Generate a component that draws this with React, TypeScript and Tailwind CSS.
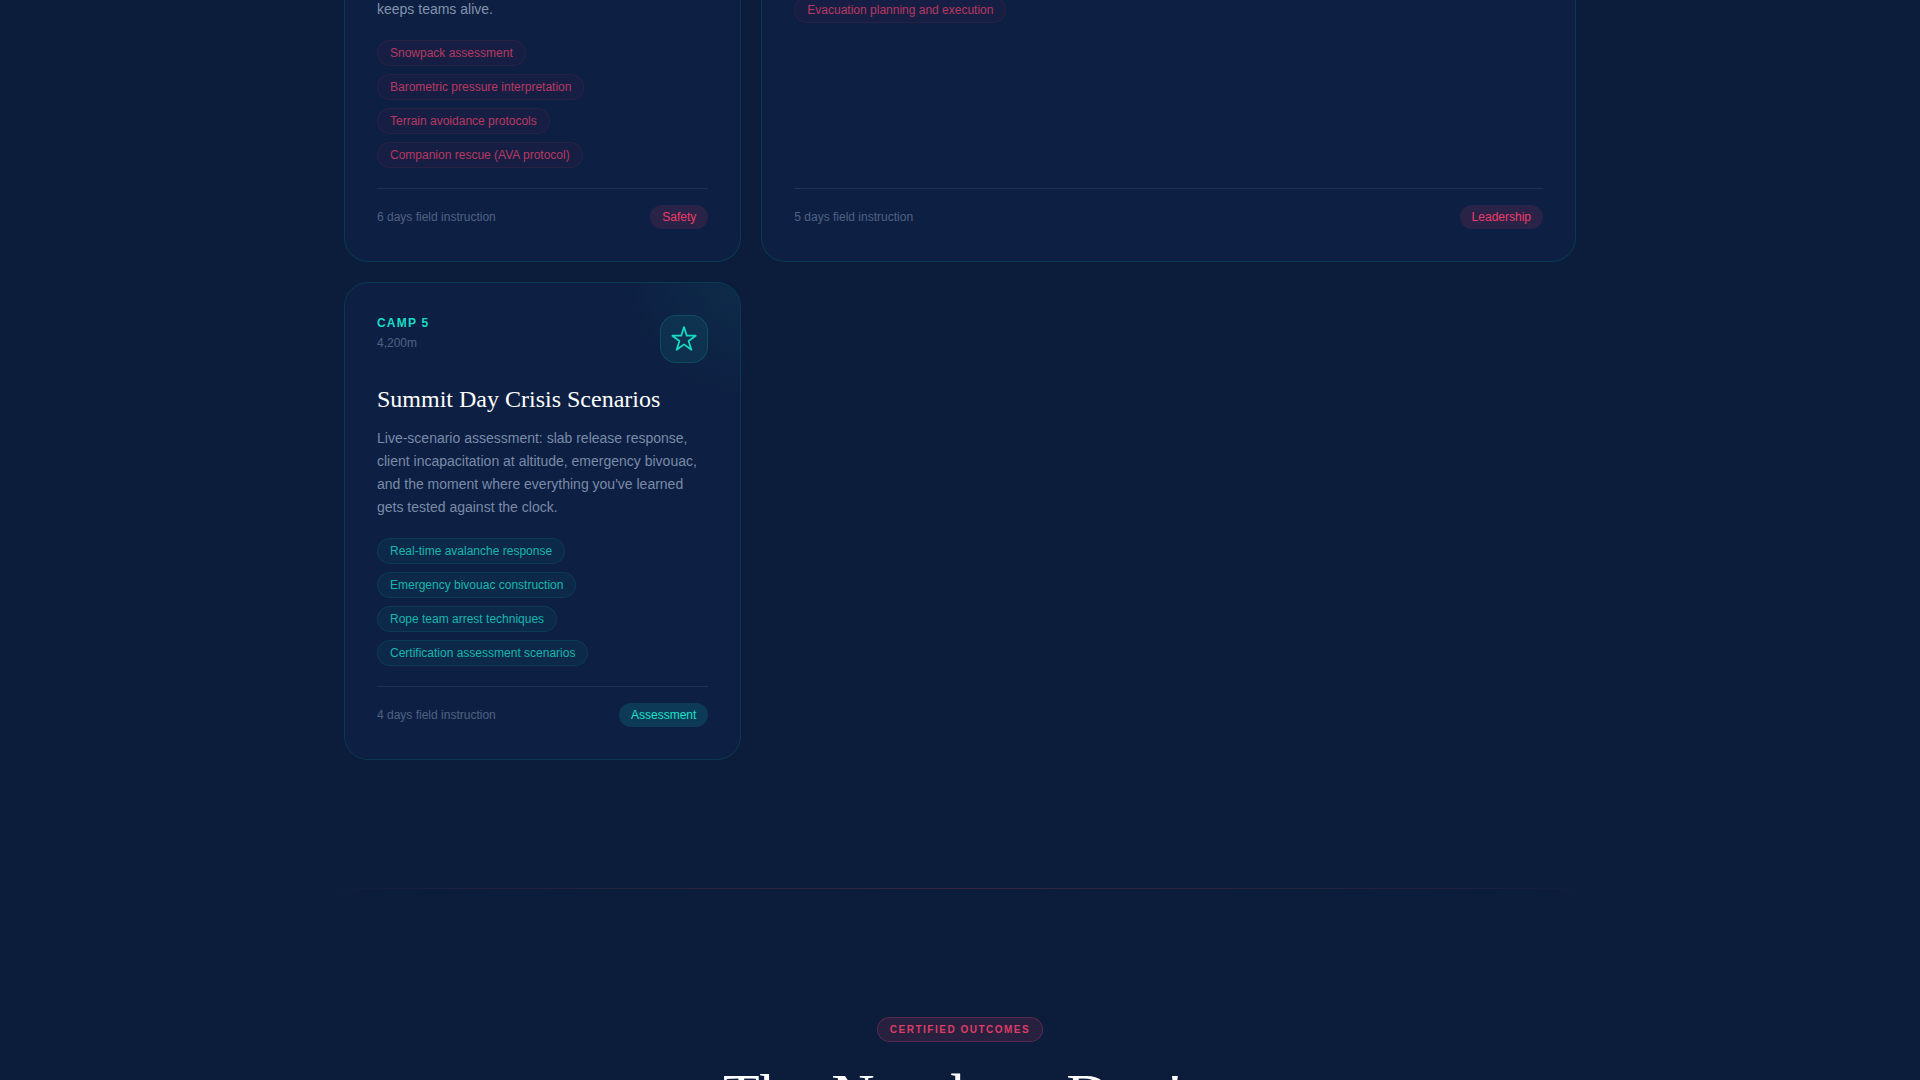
type Tone = "red" | "teal";

const tagTones: Record<Tone, string> = {
  red: "border-[#f43f5e]/8 bg-[#f43f5e]/4 text-[#b83862]",
  teal: "border-[#14b8b0]/12 bg-[#14b8b0]/7 text-[#17b6ae]",
};

const badgeTones: Record<Tone, string> = {
  red: "bg-[#f43f6e]/12 text-[#ec3c69]",
  teal: "bg-[#0cb8b8]/18 text-[#1fe0ca]",
};

function Tags({ items, tone }: { items: string[]; tone: Tone }) {
  return (
    <ul className="flex flex-col items-start gap-2">
      {items.map((item) => (
        <li key={item} className={`rounded-full border px-3 py-1 text-xs ${tagTones[tone]}`}>
          {item}
        </li>
      ))}
    </ul>
  );
}

function CardFooter({ duration, label, tone }: { duration: string; label: string; tone: Tone }) {
  return (
    <footer className="mt-auto flex items-center justify-between border-t border-[#1f3354] pt-4">
      <span className="text-xs text-[#506282]">{duration}</span>
      <span className={`rounded-full px-3 py-1 text-xs ${badgeTones[tone]}`}>{label}</span>
    </footer>
  );
}

const cardBase = "flex flex-col border border-[#0a3a52] bg-[#0d1f42] px-8 pb-8";

export default function App() {
  return (
    <div className="h-screen overflow-hidden bg-[#0b1d3a] font-['Liberation_Sans',Arial,sans-serif]">
      <main>
        <section className="mx-auto -mt-[3px] grid max-w-[1280px] grid-cols-3 gap-5 px-6 pb-32">
          <article className={`${cardBase} rounded-b-3xl border-t-0`}>
            <p className="text-sm leading-6 text-[#8393ad]">keeps teams alive.</p>
            <div className="pt-[19px] pb-5">
              <Tags
                tone="red"
                items={[
                  "Snowpack assessment",
                  "Barometric pressure interpretation",
                  "Terrain avoidance protocols",
                  "Companion rescue (AVA protocol)",
                ]}
              />
            </div>
            <CardFooter duration="6 days field instruction" label="Safety" tone="red" />
          </article>

          <article className={`${cardBase} col-span-2 rounded-b-3xl border-t-0`}>
            <Tags tone="red" items={["Evacuation planning and execution"]} />
            <CardFooter duration="5 days field instruction" label="Leadership" tone="red" />
          </article>

          <article className={`${cardBase} relative overflow-hidden rounded-3xl pt-8`}>
            <div className="pointer-events-none absolute top-0 right-0 size-30 bg-[radial-gradient(circle_at_top_right,rgba(20,184,166,0.08),transparent_70%)]" />
            <header className="flex items-start justify-between">
              <div>
                <p className="text-xs font-bold tracking-[0.1em] text-[#16dcc6]">CAMP 5</p>
                <p className="mt-1 text-xs text-[#506282]">4,200m</p>
              </div>
              <div className="flex size-12 items-center justify-center rounded-2xl border border-[#14b8a6]/20 bg-[#14b8b0]/10 text-[#16dcc6]">
                <svg viewBox="0 0 24 24" className="size-7" fill="none" stroke="currentColor" strokeWidth="1.5" aria-hidden="true">
                  <polygon points="12 1.8 14.4 9.2 22 9.2 15.9 13.7 18.3 21.2 12 16.6 5.7 21.2 8.1 13.7 2 9.2 9.6 9.2" strokeLinejoin="round" />
                </svg>
              </div>
            </header>
            <h3 className="mt-5 font-['Liberation_Serif',serif] text-2xl leading-8 text-white">
              Summit Day Crisis Scenarios
            </h3>
            <p className="mt-3 text-sm leading-[23px] text-[#7a8ba8]">
              Live-scenario assessment: slab release response, client incapacitation at altitude, emergency
              bivouac, and the moment where everything you've learned gets tested against the clock.
            </p>
            <div className="pt-[19px] pb-5">
              <Tags
                tone="teal"
                items={[
                  "Real-time avalanche response",
                  "Emergency bivouac construction",
                  "Rope team arrest techniques",
                  "Certification assessment scenarios",
                ]}
              />
            </div>
            <CardFooter duration="4 days field instruction" label="Assessment" tone="teal" />
          </article>
        </section>

        <div className="mx-auto h-px max-w-[1280px] bg-[linear-gradient(90deg,rgba(244,63,110,0)_0%,rgba(244,63,110,0.09)_12%,rgba(244,63,110,0.2)_50%,rgba(244,63,110,0.09)_88%,rgba(244,63,110,0)_100%)]" />

        <section className="flex flex-col items-center pt-32 text-center">
          <span className="rounded-full border border-[#f43f6e]/25 bg-[#f43f6e]/12 px-3 py-1 text-[10px] leading-[15px] font-bold tracking-[0.15em] text-[#dc3c66]">
            CERTIFIED OUTCOMES
          </span>
          <h2 className="mt-5 font-['Liberation_Serif',serif] text-[60px] leading-[66px] text-white">
            The Numbers Don't
          </h2>
        </section>
      </main>
    </div>
  );
}
